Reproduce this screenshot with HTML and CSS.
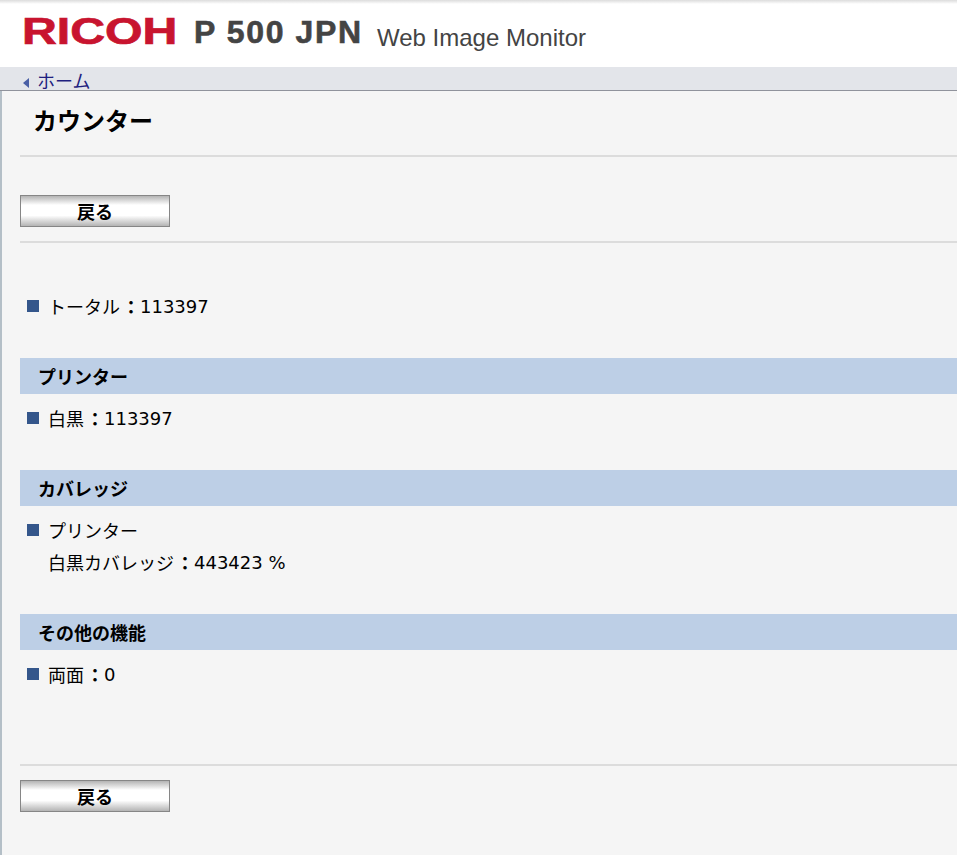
FILE: index.html
```html
<!doctype html>
<html lang="ja">
	<head>
		<meta charset="utf-8">
		<title>Web Image Monitor</title>
		<link rel="stylesheet" href="styles.css">
	</head>
	<body>
		<div class="header">
			<span class="logo-box"><span class="logo">RICOH</span></span>
			<span class="model">P 500 JPN</span>
			<span class="product">Web Image Monitor</span>
		</div>
		<div class="nav">
			<a class="home" href="#"><span class="arrow"></span>ホーム</a>
		</div>
		<div class="main">
			<h1 class="title">カウンター</h1>
			<div class="toolbar first">
				<button type="button" class="back">戻る</button>
			</div>

			<div class="row total"><span class="mark"></span>トータル<span class="colon">：</span><span class="num">113397</span></div>

			<div class="section">プリンター</div>
			<div class="row"><span class="mark"></span>白黒<span class="colon">：</span><span class="num">113397</span></div>

			<div class="section">カバレッジ</div>
			<div class="row"><span class="mark"></span>プリンター</div>
			<div class="row"><span class="mark none"></span>白黒カバレッジ<span class="colon">：</span><span class="num">443423 %</span></div>

			<div class="section">その他の機能</div>
			<div class="row"><span class="mark"></span>両面<span class="colon">：</span><span class="num">0</span></div>

			<div class="toolbar last">
				<button type="button" class="back">戻る</button>
			</div>
		</div>
	</body>
</html>
```

FILE: styles.css
```css
html, body {
	margin: 0;
	padding: 0;
}
body {
	height: 855px;
	overflow: hidden;
	background-color: #f5f5f5;
	color: #000;
	font-family: "Noto Sans CJK JP", sans-serif;
	font-size: 18px;
	display: flex;
	flex-direction: column;
}
.header {
	height: 67px;
	box-sizing: border-box;
	background: linear-gradient(#dcdcdc, #fff 4px);
	display: flex;
	align-items: flex-start;
	padding-left: 22px;
	color: #444;
	font-family: "Liberation Sans", sans-serif;
}
.logo-box {
	width: 172px;
	margin-top: 14px;
}
.logo {
	display: inline-block;
	font-size: 36px;
	line-height: 36px;
	font-weight: bold;
	color: #c8142f;
	-webkit-text-stroke: 0.7px #c8142f;
	transform: scaleX(1.34);
	transform-origin: left;
}
.model {
	margin-top: 14px;
	width: 183px;
	font-size: 32px;
	line-height: 36px;
	font-weight: bold;
	letter-spacing: 1.6px;
	-webkit-text-stroke: 0.6px #444;
}
.product {
	margin-top: 24px;
	font-size: 24px;
	line-height: 28px;
}
.nav {
	height: 23px;
	background-color: #e3e5ea;
	border-bottom: 1px solid #90939c;
	padding-left: 23px;
}
.home {
	color: #1f1f80;
	text-decoration: none;
	font-size: 18px;
	line-height: 21px;
	padding-top: 3px;
	display: flex;
	align-items: center;
	gap: 8px;
}
.arrow {
	width: 0;
	height: 0;
	border-top: 5px solid transparent;
	border-bottom: 5px solid transparent;
	border-right: 6px solid #4a5fa5;
	margin-top: 4px;
}
.main {
	flex: 1;
	border-left: 2px solid #b4bfc7;
	padding-left: 18px;
}
.title {
	margin: 0;
	height: 66px;
	box-sizing: border-box;
	padding: 11px 0 0 13px;
	font-size: 24px;
	line-height: 36px;
	font-weight: bold;
	border-bottom: 2px solid #dcdcdc;
}
.toolbar {
	box-sizing: border-box;
}
.first {
	height: 86px;
	padding-top: 38px;
	border-bottom: 2px solid #dcdcdc;
	margin-bottom: 47px;
}
.last {
	margin-top: 74px;
	padding-top: 14px;
	border-top: 2px solid #dcdcdc;
}
.back {
	display: block;
	width: 150px;
	height: 32px;
	padding: 0;
	border: 1px solid #868686;
	background: linear-gradient(#b4b4b4, #fff 30%, #fff 65%, #b4b4b4);
	font-family: "Noto Sans CJK JP", sans-serif;
	font-size: 18px;
	font-weight: bold;
	color: #000;
}
.row {
	height: 32px;
	display: flex;
	align-items: center;
	padding-left: 7px;
}
.colon {
	padding-left: 2px;
	font-family: "Noto Sans CJK TC", sans-serif;
	font-weight: bold;
}
.num {
	font-family: "DejaVu Sans", sans-serif;
	white-space: pre;
}
.mark {
	width: 12px;
	height: 12px;
	background-color: #34568b;
	margin-right: 9px;
}
.none {
	background: none;
}
.section {
	height: 36px;
	margin-top: 36px;
	margin-bottom: 8px;
	padding-left: 18px;
	background-color: #bdcfe6;
	font-size: 18px;
	font-weight: bold;
	line-height: 37px;
}
```
